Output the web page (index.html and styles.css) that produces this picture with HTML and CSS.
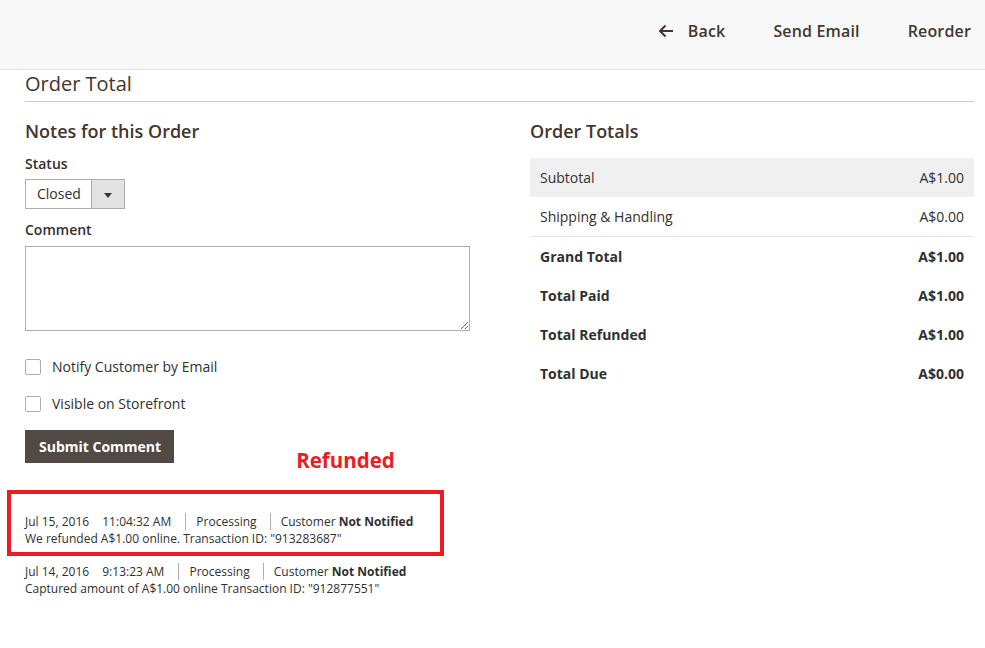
FILE: index.html
```html
<!DOCTYPE html>
<html>

<head>
    <meta charset="utf-8">
    <title>Order View</title>
    <link rel="stylesheet" href="styles.css">
</head>

<body>
    <div class="page-actions">
        <button class="action back">
            <svg width="16" height="14" viewBox="0 0 16 14"><path d="M15 7H2M7.5 1.5L2 7l5.5 5.5" fill="none" stroke="#41362f" stroke-width="2"/></svg>
            Back
        </button>
        <button class="action">Send Email</button>
        <button class="action">Reorder</button>
    </div>

    <div class="content">
        <h2 class="section-title">Order Total</h2>

        <div class="columns">
            <div class="col notes">
                <h3 class="legend">Notes for this Order</h3>

                <label class="field-label">Status</label>
                <div class="select">
                    <span class="select-value">Closed</span>
                    <span class="select-arrow"></span>
                </div>

                <label class="field-label comment-label">Comment</label>
                <textarea class="comment"></textarea>

                <div class="check first">
                    <span class="box"></span>
                    <span>Notify Customer by Email</span>
                </div>
                <div class="check">
                    <span class="box"></span>
                    <span>Visible on Storefront</span>
                </div>

                <div class="submit-row">
                    <button class="submit">Submit Comment</button>
                    <span class="refunded">Refunded</span>
                </div>

                <div class="note highlight">
                    <div class="note-meta">
                        <span class="date">Jul 15, 2016</span>
                        <span class="time">11:04:32 AM</span>
                        <span class="status">Processing</span>
                        <span class="notified">Customer <b>Not Notified</b></span>
                    </div>
                    <div>We refunded A$1.00 online. Transaction ID: "913283687"</div>
                </div>

                <div class="note">
                    <div class="note-meta">
                        <span class="date">Jul 14, 2016</span>
                        <span class="time">9:13:23 AM</span>
                        <span class="status">Processing</span>
                        <span class="notified">Customer <b>Not Notified</b></span>
                    </div>
                    <div>Captured amount of A$1.00 online Transaction ID: "912877551"</div>
                </div>
            </div>

            <div class="col totals">
                <h3 class="legend">Order Totals</h3>
                <table class="totals-table">
                    <tr class="shaded">
                        <td>Subtotal</td>
                        <td class="amount">A$1.00</td>
                    </tr>
                    <tr class="divider">
                        <td>Shipping &amp; Handling</td>
                        <td class="amount">A$0.00</td>
                    </tr>
                    <tr class="strong">
                        <td>Grand Total</td>
                        <td class="amount">A$1.00</td>
                    </tr>
                    <tr class="strong">
                        <td>Total Paid</td>
                        <td class="amount">A$1.00</td>
                    </tr>
                    <tr class="strong">
                        <td>Total Refunded</td>
                        <td class="amount">A$1.00</td>
                    </tr>
                    <tr class="strong">
                        <td>Total Due</td>
                        <td class="amount">A$0.00</td>
                    </tr>
                </table>
            </div>
        </div>
    </div>
</body>

</html>
```

FILE: styles.css
```css
* {
    box-sizing: border-box;
    margin: 0;
    padding: 0;
}

body {
    background-color: #fff;
    color: #303030;
    font-family: "Open Sans", Arial, sans-serif;
    font-size: 14px;
}

.page-actions {
    align-items: center;
    background-color: #f8f8f8;
    border-bottom: 1px solid #e3e3e3;
    display: flex;
    gap: 48px;
    height: 70px;
    justify-content: flex-end;
    padding-bottom: 8px;
    padding-right: 14px;
}

.action {
    align-items: center;
    background: none;
    border: none;
    color: #41362f;
    display: flex;
    font-family: "Open Sans", Arial, sans-serif;
    font-size: 16px;
    font-weight: 600;
    gap: 14px;
    letter-spacing: 0.01em;
}

.content {
    padding: 0 11px 0 25px;
}

.section-title {
    border-bottom: 1px solid #ccc;
    color: #41362f;
    font-size: 20px;
    font-weight: 400;
    line-height: 24px;
    margin-top: 2px;
    padding-bottom: 5px;
}

.columns {
    display: grid;
    gap: 61px;
    grid-template-columns: 444px 1fr;
    margin-top: 18px;
}

.legend {
    color: #41362f;
    font-size: 18px;
    font-weight: 600;
    line-height: 22px;
}

.field-label {
    display: block;
    font-weight: 600;
    line-height: 19px;
    margin-top: 12px;
}

.comment-label {
    margin-top: 11px;
}

.select {
    border: 1px solid #adadad;
    display: flex;
    height: 30px;
    margin-top: 6px;
    width: 100px;
}

.select-value {
    flex: 1;
    line-height: 28px;
    padding-left: 11px;
}

.select-arrow {
    background-color: #e3e3e3;
    border-left: 1px solid #adadad;
    position: relative;
    width: 33px;
}

.select-arrow::after {
    border-left: 4px solid transparent;
    border-right: 4px solid transparent;
    border-top: 5px solid #41362f;
    content: "";
    left: 12px;
    position: absolute;
    top: 13px;
}

.comment {
    border: 1px solid #adadad;
    display: block;
    height: 85px;
    margin-top: 7px;
    width: 445px;
}

.check {
    align-items: center;
    display: flex;
    gap: 11px;
    line-height: 19px;
    margin-top: 18px;
}

.check.first {
    margin-top: 26px;
}

.box {
    border: 1px solid #adadad;
    border-radius: 2px;
    height: 16px;
    width: 16px;
}

.submit-row {
    align-items: flex-start;
    display: flex;
    margin-top: 17px;
}

.submit {
    background-color: #514943;
    border: none;
    color: #fff;
    font-family: "Open Sans", Arial, sans-serif;
    font-size: 14px;
    font-weight: 700;
    height: 33px;
    padding: 0 13px 0 14px;
}

.refunded {
    color: #ed1c24;
    font-size: 20.5px;
    font-weight: 700;
    line-height: 24px;
    margin-left: 122px;
    margin-top: 18px;
}

.note {
    font-size: 12px;
    line-height: 17px;
}

.note.highlight {
    border: 4px solid #ed1c24;
    margin: 18px 0 7px -18px;
    padding: 19px 0 5px 14px;
    width: 437px;
}

.note-meta span {
    display: inline-block;
}

.note-meta .time {
    margin-left: 10px;
    padding-right: 11px;
}

.note-meta .status {
    border-left: 1px solid #adadad;
    padding: 0 10px 0 10px;
}

.note-meta .notified {
    border-left: 1px solid #adadad;
    padding-left: 10px;
}

.totals-table {
    border-collapse: collapse;
    margin-top: 16px;
    width: 100%;
}

.totals-table td {
    line-height: 19px;
    padding: 10px 10px;
}

.totals-table .amount {
    text-align: right;
}

.totals-table .shaded {
    background-color: #f0f0f0;
}

.totals-table .divider td {
    border-bottom: 1px solid #e3e3e3;
}

.totals-table .strong td {
    font-weight: 700;
}
```
